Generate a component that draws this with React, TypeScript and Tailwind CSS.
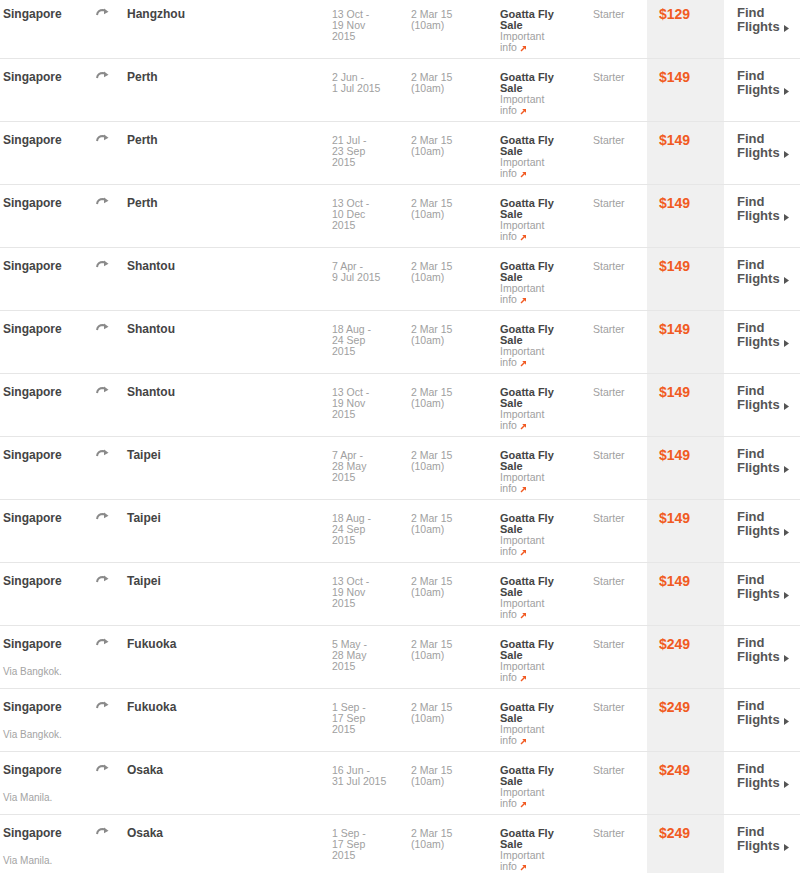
import React from 'react';

type Fare = {
    to: string,
    period: string[],
    price: string,
    via?: string,
}

const fares: Fare[] = [
    { to: 'Hangzhou', period: ['13 Oct -', '19 Nov', '2015'], price: '$129' },
    { to: 'Perth', period: ['2 Jun -', '1 Jul 2015'], price: '$149' },
    { to: 'Perth', period: ['21 Jul -', '23 Sep', '2015'], price: '$149' },
    { to: 'Perth', period: ['13 Oct -', '10 Dec', '2015'], price: '$149' },
    { to: 'Shantou', period: ['7 Apr -', '9 Jul 2015'], price: '$149' },
    { to: 'Shantou', period: ['18 Aug -', '24 Sep', '2015'], price: '$149' },
    { to: 'Shantou', period: ['13 Oct -', '19 Nov', '2015'], price: '$149' },
    { to: 'Taipei', period: ['7 Apr -', '28 May', '2015'], price: '$149' },
    { to: 'Taipei', period: ['18 Aug -', '24 Sep', '2015'], price: '$149' },
    { to: 'Taipei', period: ['13 Oct -', '19 Nov', '2015'], price: '$149' },
    { to: 'Fukuoka', period: ['5 May -', '28 May', '2015'], price: '$249', via: 'Via Bangkok.' },
    { to: 'Fukuoka', period: ['1 Sep -', '17 Sep', '2015'], price: '$249', via: 'Via Bangkok.' },
    { to: 'Osaka', period: ['16 Jun -', '31 Jul 2015'], price: '$249', via: 'Via Manila.' },
    { to: 'Osaka', period: ['1 Sep -', '17 Sep', '2015'], price: '$249', via: 'Via Manila.' },
];

function RouteArrow() {
    return (
        <svg width="13" height="8" viewBox="0 0 13 8" className="block">
            <path d="M1 7 C1.5 3.5 4 2 7 2 L9 2.6" fill="none" stroke="#8a8a8a" strokeWidth="2" />
            <path d="M8 0.5 L12.5 3.8 L8 6.2 Z" fill="#8a8a8a" />
        </svg>
    );
}

function ExternalArrow() {
    return (
        <svg width="7" height="7" viewBox="0 0 7 7" className="inline-block ml-[3px] align-[-1px]">
            <path d="M1 6 L5.5 1.5" stroke="#f15a22" strokeWidth="1.4" />
            <path d="M2.2 1 L6 1 L6 4.8 Z" fill="#f15a22" />
        </svg>
    );
}

function FareRow({ fare }: { fare: Fare }) {
    return (
        <div className="flex h-[63px] w-[800px] border-b border-[#e6e6e6]">
            <div className="w-[93px] pl-[3px] pt-[11px]">
                <div className="text-[12px] leading-[15px] font-bold text-[#444]">Singapore</div>
                {fare.via && (
                    <div className="mt-[14px] text-[10px] leading-[12px] text-[#a3a3a3]">{fare.via}</div>
                )}
            </div>
            <div className="w-[31px] pl-[3px] pt-[12px]">
                <RouteArrow />
            </div>
            <div className="w-[205px] pl-[3px] pt-[11px] text-[12px] leading-[15px] font-bold text-[#444]">
                {fare.to}
            </div>
            <div className="w-[79px] pl-[3px] pt-[13px] text-[10.5px] leading-[11px] text-[#a0a0a0]">
                {fare.period.map((line, i) => <div key={i}>{line}</div>)}
            </div>
            <div className="w-[89px] pl-[3px] pt-[13px] text-[10.5px] leading-[11px] text-[#a0a0a0]">
                <div>2 Mar 15</div>
                <div>(10am)</div>
            </div>
            <div className="w-[93px] pl-[3px] pt-[13px]">
                <div className="text-[11px] leading-[11px] font-bold text-[#444]">
                    <div>Goatta Fly</div>
                    <div>Sale</div>
                </div>
                <div className="text-[10.5px] leading-[11px] text-[#a0a0a0]">
                    <div>Important</div>
                    <div>info<ExternalArrow /></div>
                </div>
            </div>
            <div className="w-[57px] pl-[3px] pt-[13px] text-[10.5px] leading-[11px] text-[#a0a0a0]">
                Starter
            </div>
            <div className="w-[77px] pl-[12px] pt-[10px] bg-[#f0f0f0] text-[14px] leading-[16px] font-bold text-[#f15a22]">
                {fare.price}
            </div>
            <div className="w-[76px] pl-[13px] pt-[10px] text-[13px] leading-[14px] font-bold text-[#555]">
                <div>Find</div>
                <div className="flex items-center">
                    Flights
                    <svg width="5" height="7" viewBox="0 0 5 7" className="ml-[4px] mt-[2px]">
                        <path d="M0 0 L5 3.5 L0 7 Z" fill="#555" />
                    </svg>
                </div>
            </div>
        </div>
    );
}

export default function App() {
    return (
        <div className="h-[873px] overflow-hidden bg-white" style={{ fontFamily: '"Liberation Sans", Arial, sans-serif' }}>
            <div className="-mt-[4px]">
                {fares.map((fare, i) => <FareRow key={i} fare={fare} />)}
            </div>
        </div>
    );
}
